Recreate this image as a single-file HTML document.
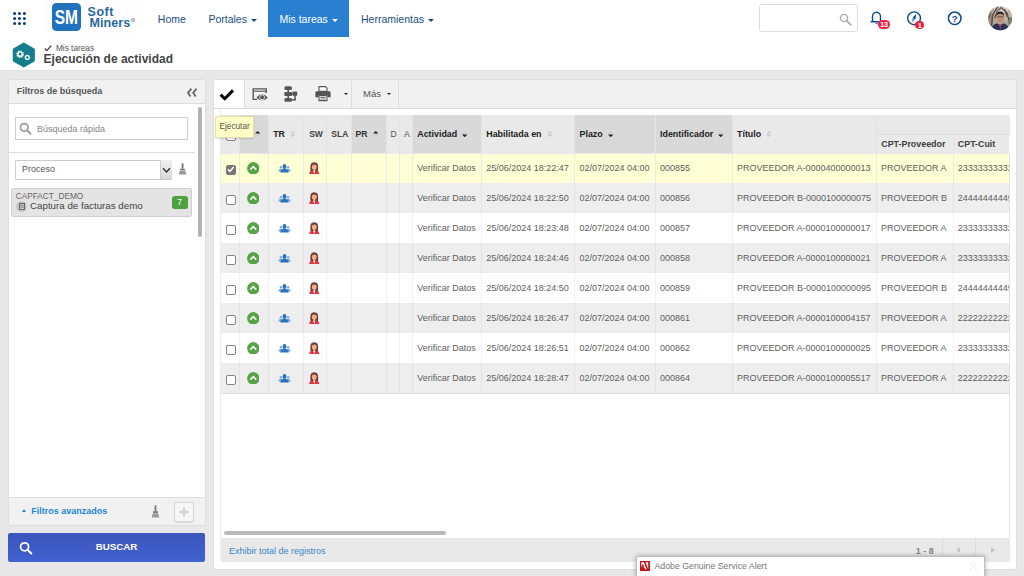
<!DOCTYPE html>
<html><head><meta charset="utf-8">
<style>
*{box-sizing:border-box;margin:0;padding:0}
html,body{width:1024px;height:576px;overflow:hidden;background:#e8e8e8;font-family:"Liberation Sans",sans-serif;color:#555}
.abs{position:absolute}
#top{position:absolute;left:0;top:0;width:1024px;height:71.2px;background:#fff;border-bottom:1px solid #e2e2e2}
.nav{position:absolute;top:0;height:37px;font-size:10.5px;color:#1c4e80;line-height:38.2px;white-space:nowrap}
.caret{display:inline-block;width:0;height:0;border-left:3px solid transparent;border-right:3px solid transparent;border-top:3px solid currentColor;vertical-align:middle;margin-left:4px}
#lp{position:absolute;left:8px;top:79.2px;width:197.5px;height:447px;background:#fff;border:1px solid #dedede;border-radius:3px;overflow:hidden}
#rp{position:absolute;left:213px;top:79.2px;width:804px;height:490.6px;background:#fff;border:1px solid #dedede;border-radius:3px}
#tb{position:absolute;left:0;top:0;right:0;height:28.6px;background:#f1f1f1;border-bottom:1px solid #d9d9d9;border-radius:3px 3px 0 0}
#grid{position:absolute;left:220px;top:115px;width:789.5px;height:447px;overflow:hidden;border-radius:2px}
#gi{position:absolute;left:1px;top:0;width:788.5px;height:447px}
.row{box-shadow:-1px 0 0 rgba(255,255,255,.5)}.row.e{box-shadow:-1px 0 0 rgba(238,238,238,.55)}.row.sel{box-shadow:-1px 0 0 rgba(255,255,213,.55)}
.hc{position:absolute;top:0;height:38.7px;background:#e9e9e9;border-right:1px solid #e4e4e4;font-size:8.9px;font-weight:bold;color:#222;line-height:38.6px;white-space:nowrap;overflow:hidden}
.hc.s{background:#d9d9d9}
.row{position:absolute;left:0;width:788.5px;height:30px;font-size:9px;color:#606060;line-height:30px}
.row.e{background:#eee}
.row.sel{background:linear-gradient(#e9e9e9 0,#e9e9e9 0.5px,#ffffd5 0.5px)}
.row.sel .c{border-right-color:rgba(215,215,235,.5)}
.c{position:absolute;top:0;height:30px;border-right:1px solid rgba(90,90,120,.075);white-space:nowrap;overflow:hidden;padding-left:4.5px}
.cb{position:absolute;left:4.75px;top:11.85px;width:9.75px;height:9.75px;border:1px solid #858585;border-radius:2px;background:#fff}
.cb.on{background:#767676;border-color:#767676}
</style></head><body>
<div id="top">
<!-- app grid icon -->
<svg class="abs" style="left:13px;top:11.5px" width="13" height="13" viewBox="0 0 13 13"><g fill="#0b3d7c">
<circle cx="1.6" cy="1.6" r="1.5"/><circle cx="6.5" cy="1.6" r="1.5"/><circle cx="11.4" cy="1.6" r="1.5"/>
<circle cx="1.6" cy="6.5" r="1.5"/><circle cx="6.5" cy="6.5" r="1.5"/><circle cx="11.4" cy="6.5" r="1.5"/>
<circle cx="1.6" cy="11.4" r="1.5"/><circle cx="6.5" cy="11.4" r="1.5"/><circle cx="11.4" cy="11.4" r="1.5"/></g></svg>
<!-- logo -->
<div class="abs" style="left:45px;top:0;width:97px;height:34px;background:#fdfdfe"></div>
<div class="abs" style="left:52.2px;top:2.9px;width:28.5px;height:27.9px;border-radius:4.5px;background:#1f72bb"></div>
<svg class="abs" style="left:52.2px;top:2.9px" width="28.5" height="27.9" viewBox="0 0 28.5 27.9"><text x="2.7" y="21.3" font-family="Liberation Sans" font-weight="bold" font-size="19.5" fill="#fff" textLength="23.2" lengthAdjust="spacingAndGlyphs">SM</text></svg>
<div class="abs" style="left:87.6px;top:5.7px;font-size:12.5px;line-height:13px;font-weight:bold;color:#2a6a9e;letter-spacing:0.5px">Soft</div>
<div class="abs" style="left:89.6px;top:17px;font-size:12.5px;line-height:13px;font-weight:bold;color:#2a6a9e;letter-spacing:0.05px">Miners</div>
<div class="abs" style="left:131px;top:17.7px;width:4.2px;height:4.2px;border-radius:2.1px;background:#8ea7ba"></div>
<div class="abs" style="left:132.1px;top:18.8px;width:2px;height:2px;border-radius:1px;background:#d5dee6"></div>
<!-- nav -->
<div class="nav" style="left:157.8px">Home</div>
<div class="nav" style="left:208.4px">Portales<span class="caret"></span></div>
<div class="nav" style="left:268px;width:81px;background:#2a80d0;color:#fff;padding-left:11.4px">Mis tareas<span class="caret"></span></div>
<div class="nav" style="left:361px">Herramientas<span class="caret"></span></div>
<!-- search -->
<div class="abs" style="left:758.5px;top:4.1px;width:99px;height:28.4px;border:1px solid #ddd;border-radius:3px;background:#fff"></div>
<svg class="abs" style="left:838.5px;top:12.5px" width="13" height="13" viewBox="0 0 13 13"><circle cx="5" cy="5" r="3.6" fill="none" stroke="#aaa" stroke-width="1.4"/><path d="M7.8 7.8 L11.8 11.8" stroke="#aaa" stroke-width="1.7" stroke-linecap="round"/></svg>
<!-- bell -->
<svg class="abs" style="left:869.5px;top:11px" width="14" height="15" viewBox="0 0 14 15"><path d="M2.5 10.6 L2.5 5.6 A4 4.4 0 0 1 10.5 5.6 L10.5 10.6 M1.1 10.7 L12 10.7" fill="none" stroke="#0c4a87" stroke-width="1.4" stroke-linecap="round"/><path d="M5.2 12.3 A1.5 1.5 0 0 0 8.0 12.3 Z" fill="#0c4a87"/></svg>
<div class="abs" style="left:878px;top:19.5px;width:12px;height:9.4px;border-radius:4.7px;background:#e9243f;color:#fff;font-size:7.3px;line-height:9.6px;letter-spacing:-0.3px;font-weight:bold;text-align:center">13</div>
<!-- compass -->
<svg class="abs" style="left:906.5px;top:11px" width="15" height="15" viewBox="0 0 15 15"><circle cx="7.1" cy="7.3" r="6.4" fill="#fff" stroke="#0c4a87" stroke-width="1.4"/><path d="M9.4 2.8 L5.4 6.9 L8.4 8.3 Z" fill="#0c4a87"/><path d="M5.2 11.6 L5.4 6.9 L8.4 8.3 Z" fill="#4f9be0"/></svg>
<div class="abs" style="left:915.4px;top:20.5px;width:8.8px;height:8.8px;border-radius:4.4px;background:#e9243f;color:#fff;font-size:7.3px;line-height:9px;font-weight:bold;text-align:center">1</div>
<!-- help -->
<svg class="abs" style="left:946.5px;top:11px" width="16" height="16" viewBox="0 0 16 16"><circle cx="7.7" cy="7.3" r="6.3" fill="#fff" stroke="#0c4a87" stroke-width="1.5"/><text x="7.7" y="10.6" font-family="Liberation Sans" font-size="9.5" font-weight="bold" fill="#0c4a87" text-anchor="middle">?</text></svg>
<!-- avatar -->
<svg class="abs" style="left:987.9px;top:6.3px" width="24.4" height="24.4" viewBox="0 0 24 24"><defs><clipPath id="av"><circle cx="12" cy="12" r="12"/></clipPath><filter id="avb"><feGaussianBlur stdDeviation="0.45"/></filter></defs><g clip-path="url(#av)"><g filter="url(#avb)"><rect x="-2" y="-2" width="28" height="28" fill="#b3a59b"/><rect x="6" y="-1" width="14" height="9" fill="#d6d1cd"/><rect x="16" y="6" width="9" height="9" fill="#c4b7a6"/><rect x="19.5" y="11" width="5" height="7" fill="#7b8466"/><rect x="-1" y="8" width="6" height="11" fill="#9d8f86"/><g stroke="#5e4a44" fill="none"><path d="M3.5 20 L4.5 9 L8 3 L10 1" stroke-width="1.4"/><path d="M6.5 12 L9 5 L13 1.5 L17 5.5 L19 11" stroke-width="1.2"/><path d="M20.5 14 L19 7 L16 3" stroke-width="1"/><path d="M1 12 L3 6" stroke-width="0.9"/></g><ellipse cx="12" cy="11.8" rx="3.5" ry="5" fill="#c09072"/><path d="M8.2 9.6 Q8 5.6 12 5.4 Q16 5.6 15.8 9.6 Q14 7.6 12 7.7 Q10 7.6 8.2 9.6 Z" fill="#2b2220"/><path d="M8.8 10.6 H15.2" stroke="#4a3a36" stroke-width="0.7"/><path d="M2.6 25 Q3 18.6 9.2 17 L12 19.5 L14.8 17 Q21 18.6 21.4 25 Z" fill="#2a3350"/><path d="M10.6 17.6 L12 22 L13.4 17.6 Z" fill="#c8426a"/><path d="M12 20 V25" stroke="#3c5cc0" stroke-width="0.7"/></g></g></svg>
<!-- title row -->
<svg class="abs" style="left:11.9px;top:41.7px" width="23.6" height="26" viewBox="0 0 23 26" preserveAspectRatio="none"><path d="M11.5 0.6 L21.4 6.3 Q22.3 6.8 22.3 7.8 L22.3 18.2 Q22.3 19.2 21.4 19.7 L11.5 25.4 L1.6 19.7 Q0.7 19.2 0.7 18.2 L0.7 7.8 Q0.7 6.8 1.6 6.3 Z" fill="#137f8c"/><circle cx="7.9" cy="12.2" r="2.2" fill="none" stroke="#fff" stroke-width="1.6"/><circle cx="7.9" cy="12.2" r="3.3" fill="none" stroke="#fff" stroke-width="1" stroke-dasharray="1.2 1.4"/><circle cx="14.9" cy="15.4" r="1.9" fill="none" stroke="#fff" stroke-width="1.3"/></svg>
<svg class="abs" style="left:43.5px;top:45.3px" width="8" height="7" viewBox="0 0 8 7"><path d="M0.8 3.6 L2.8 5.6 L7.2 0.8" fill="none" stroke="#444" stroke-width="1.35"/></svg>
<div class="abs" style="left:56px;top:44.2px;font-size:8.25px;line-height:10px;color:#555;white-space:nowrap">Mis tareas</div>
<div class="abs" style="left:43.6px;top:51.5px;font-size:12px;line-height:14px;font-weight:bold;color:#444;white-space:nowrap">Ejecución de actividad</div>
</div>
<div id="lp"><div class="abs" style="left:-9px;top:-80.2px;width:220px;height:576px">
<div class="abs" style="left:8px;top:80px;width:198px;height:24.2px;background:#f1f1f1;border-bottom:1px solid #dcdcdc"></div>
<div class="abs" style="left:16.7px;top:85.5px;font-size:9px;line-height:11px;font-weight:bold;color:#555;white-space:nowrap">Filtros de búsqueda</div>
<svg class="abs" style="left:186px;top:87.5px" width="12" height="9" viewBox="0 0 12 9"><path d="M5.4 0.6 L2 4.6 L4.4 8.4 M10.6 0.6 L7.2 4.6 L9.6 8.4" fill="none" stroke="#666" stroke-width="1.8"/></svg>
<!-- scrollbar -->
<div class="abs" style="left:198.4px;top:106.6px;width:3.6px;height:130.6px;border-radius:2px;background:#b3b3b3"></div>
<!-- quick search -->
<div class="abs" style="left:15.3px;top:117px;width:172.7px;height:22.8px;border:1px solid #ccc;background:#fff"></div>
<svg class="abs" style="left:19px;top:121.7px" width="13" height="13" viewBox="0 0 13 13"><circle cx="5.2" cy="5.4" r="3.8" fill="none" stroke="#9a9a9a" stroke-width="1.7"/><path d="M8.2 8.4 L11.6 11.8" stroke="#9a9a9a" stroke-width="1.9" stroke-linecap="round"/></svg>
<div class="abs" style="left:37px;top:123.8px;font-size:9px;line-height:11px;color:#858585;white-space:nowrap">Búsqueda rápida</div>
<div class="abs" style="left:9px;top:151.7px;width:185.7px;height:1px;background:#dcdcdc"></div>
<!-- select -->
<div class="abs" style="left:15.3px;top:159.5px;width:157px;height:20.2px;border:1px solid #ccc;background:#fff;border-radius:1px"></div>
<div class="abs" style="left:159.7px;top:160.3px;width:12px;height:18.6px;background:linear-gradient(#f0f0f0,#d8d8d8);border-left:1px solid #ccc"></div>
<svg class="abs" style="left:161.5px;top:166.5px" width="9" height="7" viewBox="0 0 9 7"><path d="M1 1.3 L4.5 5 L8 1.3" fill="none" stroke="#333" stroke-width="1.5"/></svg>
<div class="abs" style="left:22px;top:164.1px;font-size:9px;line-height:11px;color:#555;white-space:nowrap">Proceso</div>
<!-- broom -->
<svg class="abs" style="left:177.9px;top:162.7px" width="9.2" height="12" viewBox="0 0 8 12" preserveAspectRatio="none"><rect x="3.2" y="0.3" width="1.6" height="5.5" fill="#777"/><rect x="1.8" y="5.8" width="4.4" height="1.6" fill="#777"/><path d="M1.6 7.8 L6.4 7.8 L7.4 11.4 L0.6 11.4 Z" fill="#999"/></svg>
<!-- item -->
<div class="abs" style="left:11.3px;top:187.8px;width:180.3px;height:29px;background:#e4e4e4;border:1px solid #d0d0d0;border-radius:2px"></div>
<div class="abs" style="left:15.8px;top:191.8px;font-size:8.25px;line-height:10px;color:#666;white-space:nowrap">CAPFACT_DEMO</div>
<div class="abs" style="left:16.2px;top:201.4px;width:10.5px;height:10.5px;border-radius:6px;background:#c8c8c8"></div>
<svg class="abs" style="left:18.7px;top:203.4px" width="6" height="7" viewBox="0 0 6 7"><rect x="0.5" y="0.5" width="5" height="6" fill="none" stroke="#666" stroke-width="1"/><path d="M1.5 2.5 H4.5 M1.5 4.3 H4.5" stroke="#666" stroke-width="0.7"/></svg>
<div class="abs" style="left:30px;top:200.3px;font-size:9.75px;line-height:12px;color:#444;white-space:nowrap">Captura de facturas demo</div>
<div class="abs" style="left:171.5px;top:196px;width:16.1px;height:12.9px;background:#4fa13f;border-radius:2.5px;color:#fff;font-size:9px;line-height:12.5px;text-align:center">7</div>
<!-- footer -->
<div class="abs" style="left:8px;top:497px;width:198px;height:30px;background:#f1f1f1;border-top:1px solid #dcdcdc"></div>
<div class="abs" style="left:21.8px;top:509.3px;width:0;height:0;border-left:2.8px solid transparent;border-right:2.8px solid transparent;border-bottom:3.4px solid #1b87d4"></div>
<div class="abs" style="left:31.2px;top:506px;font-size:9px;line-height:11px;font-weight:bold;color:#1b87d4;white-space:nowrap">Filtros avanzados</div>
<svg class="abs" style="left:151px;top:504.5px" width="9" height="13" viewBox="0 0 9 13"><rect x="3.6" y="0.3" width="1.8" height="6" fill="#777"/><rect x="2" y="6.2" width="5" height="1.7" fill="#777"/><path d="M1.8 8.3 L7.2 8.3 L8.4 12.6 L0.6 12.6 Z" fill="#9a9a9a"/></svg>
<div class="abs" style="left:173.5px;top:501.5px;width:20.5px;height:20px;border:1px solid #d6d6d6;border-radius:2px;background:#f5f5f5;box-shadow:0 0.5px 1px rgba(0,0,0,.08)"></div>
<svg class="abs" style="left:178.5px;top:506.5px" width="10" height="10" viewBox="0 0 10 10"><path d="M5 0.5 V9.5 M0.5 5 H9.5" stroke="#d2d2d2" stroke-width="2.5"/></svg>
</div></div>
<!-- buscar -->
<div class="abs" style="left:8.2px;top:533.2px;width:196.8px;height:28.5px;border-radius:2px;background:linear-gradient(#3c55ba,#4162d2)"></div>
<svg class="abs" style="left:18.9px;top:540.7px" width="14" height="14" viewBox="0 0 14 14"><circle cx="5.6" cy="5.8" r="4" fill="none" stroke="#fff" stroke-width="1.7"/><path d="M8.7 8.9 L12.3 12.5" stroke="#fff" stroke-width="2" stroke-linecap="round"/></svg>
<div class="abs" style="left:95.7px;top:541px;font-size:9.75px;line-height:12px;font-weight:bold;color:#fff;white-space:nowrap">BUSCAR</div>
<div id="rp"><div id="tb"><div class="abs" style="left:-214px;top:-80.2px;width:1024px;height:120px">
<div class="abs" style="left:214px;top:80.2px;width:30.2px;height:27.6px;background:#fff;border-radius:3px 0 0 0"></div>
<div class="abs" style="left:244.2px;top:80.5px;width:1px;height:28px;background:#dcdcdc"></div>
<div class="abs" style="left:351.2px;top:80.5px;width:1px;height:28px;background:#dcdcdc"></div>
<div class="abs" style="left:398.4px;top:80.5px;width:1px;height:28px;background:#dcdcdc"></div>
<svg class="abs" style="left:218.7px;top:88px" width="16" height="13" viewBox="0 0 16 13"><path d="M1.6 6.6 L5.8 10.8 L14 2.4" fill="none" stroke="#000" stroke-width="3" stroke-linejoin="round"/></svg>
<!-- window eye -->
<svg class="abs" style="left:252.4px;top:87.9px" width="16" height="14" viewBox="0 0 16 14"><path d="M5.2 11.4 H1.2 V0.9 H14.2 V5" fill="none" stroke="#555" stroke-width="1.4"/><path d="M1.2 3.2 H14.2" stroke="#555" stroke-width="1.1"/><path d="M4.4 9.4 Q10 3.2 15.8 9.4 Q10 15.2 4.4 9.4 Z" fill="#555"/><circle cx="10.1" cy="9.3" r="2.5" fill="none" stroke="#f1f1f1" stroke-width="0.9"/></svg>
<!-- flow -->
<svg class="abs" style="left:283.8px;top:86.2px" width="14" height="16" viewBox="0 0 14 16"><g fill="#555"><rect x="0.4" y="0.2" width="7.6" height="3.8" rx="1.5"/><rect x="0.4" y="6" width="7.6" height="4" rx="0.5"/><rect x="0.4" y="11.9" width="7.6" height="3.8" rx="1.5"/><rect x="8.6" y="5.6" width="4.6" height="4.2" rx="0.5"/><rect x="3.4" y="3" width="1.6" height="10"/><rect x="7" y="7.2" width="3" height="1.5"/><rect x="10.3" y="9" width="1.5" height="5.2"/><rect x="7.4" y="13" width="4.4" height="1.5"/></g></svg>
<!-- printer -->
<svg class="abs" style="left:315.1px;top:86.1px" width="16" height="16" viewBox="0 0 16 16"><g fill="#555"><path d="M4 0.6 H10.4 L12 2.2 V5.4 H4 Z" fill="#fff" stroke="#555" stroke-width="1.1"/><path d="M1.6 5.2 H14.4 Q15.6 5.2 15.6 6.4 V11.2 H12.6 V9 H3.4 V11.2 H0.4 V6.4 Q0.4 5.2 1.6 5.2 Z"/><path d="M4 9.6 H12 V14.6 H4 Z" fill="#fff" stroke="#555" stroke-width="1.1"/><rect x="5.4" y="11" width="5.2" height="0.8"/><rect x="5.4" y="12.6" width="5.2" height="0.8"/></g></svg>
<div class="abs" style="left:343.9px;top:92.9px;width:0;height:0;border-left:2px solid transparent;border-right:2px solid transparent;border-top:2.6px solid #222"></div>
<div class="abs" style="left:363px;top:87.8px;font-size:9.5px;line-height:11px;color:#555;white-space:nowrap">Más</div>
<div class="abs" style="left:387.3px;top:93px;width:0;height:0;border-left:2.1px solid transparent;border-right:2.1px solid transparent;border-top:2.6px solid #222"></div>
</div></div></div>
<div id="grid"><div id="gi">
<div class="hc " style="left:0px;width:19.25px;box-shadow:-1px 0 0 rgba(233,233,233,.6)"></div>
<div class="hc s" style="left:19.25px;width:28.25px;padding-left:10px"><svg style="display:inline-block;vertical-align:middle;margin-left:5.2px;margin-top:-0.6px" width="5.4" height="6.2" viewBox="0 0 5.4 6.2"><path d="M0 2.4 L2.7 0 L5.4 2.4 Z" fill="#222"/><path d="M0 3.6 L2.7 6.2 L5.4 3.6 Z" fill="#cdcdcd"/></svg></div>
<div class="hc " style="left:47.5px;width:35.5px;padding-left:4.7px;font-size:8.7px;word-spacing:-1.5px">TR<svg style="display:inline-block;vertical-align:middle;margin-left:5.2px;margin-top:-0.6px" width="5.4" height="6.2" viewBox="0 0 5.4 6.2"><path d="M0 2.4 L2.7 0 L5.4 2.4 Z" fill="#cdcdcd"/><path d="M0 3.6 L2.7 6.2 L5.4 3.6 Z" fill="#cdcdcd"/></svg></div>
<div class="hc " style="left:83px;width:22.5px;padding-left:5.2px;color:#444;font-size:8.5px">SW</div>
<div class="hc " style="left:105.5px;width:25.0px;padding-left:4.8px;color:#444;font-size:8.5px">SLA</div>
<div class="hc s" style="left:130.5px;width:35.25px;padding-left:4px;color:#333;font-size:8.7px">PR<svg style="display:inline-block;vertical-align:middle;margin-left:5.2px;margin-top:-0.6px" width="5.4" height="6.2" viewBox="0 0 5.4 6.2"><path d="M0 2.4 L2.7 0 L5.4 2.4 Z" fill="#222"/><path d="M0 3.6 L2.7 6.2 L5.4 3.6 Z" fill="#cdcdcd"/></svg></div>
<div class="hc " style="left:165.75px;width:13.5px;padding-left:3.75px;font-weight:normal;color:#555;font-size:8.7px">D</div>
<div class="hc " style="left:179.25px;width:12.5px;padding-left:3.75px;font-weight:normal;color:#555;font-size:8.7px">A</div>
<div class="hc s" style="left:191.75px;width:69.0px;padding-left:4.5px">Actividad<svg style="display:inline-block;vertical-align:middle;margin-left:5.2px;margin-top:-0.6px" width="5.4" height="6.2" viewBox="0 0 5.4 6.2"><path d="M0 2.4 L2.7 0 L5.4 2.4 Z" fill="#cdcdcd"/><path d="M0 3.6 L2.7 6.2 L5.4 3.6 Z" fill="#222"/></svg></div>
<div class="hc " style="left:260.75px;width:93.25px;padding-left:4.5px">Habilitada en<svg style="display:inline-block;vertical-align:middle;margin-left:5.2px;margin-top:-0.6px" width="5.4" height="6.2" viewBox="0 0 5.4 6.2"><path d="M0 2.4 L2.7 0 L5.4 2.4 Z" fill="#cdcdcd"/><path d="M0 3.6 L2.7 6.2 L5.4 3.6 Z" fill="#cdcdcd"/></svg></div>
<div class="hc s" style="left:354px;width:80.5px;padding-left:4.5px">Plazo<svg style="display:inline-block;vertical-align:middle;margin-left:5.2px;margin-top:-0.6px" width="5.4" height="6.2" viewBox="0 0 5.4 6.2"><path d="M0 2.4 L2.7 0 L5.4 2.4 Z" fill="#cdcdcd"/><path d="M0 3.6 L2.7 6.2 L5.4 3.6 Z" fill="#222"/></svg></div>
<div class="hc s" style="left:434.5px;width:77.0px;padding-left:4.5px">Identificador<svg style="display:inline-block;vertical-align:middle;margin-left:5.2px;margin-top:-0.6px" width="5.4" height="6.2" viewBox="0 0 5.4 6.2"><path d="M0 2.4 L2.7 0 L5.4 2.4 Z" fill="#cdcdcd"/><path d="M0 3.6 L2.7 6.2 L5.4 3.6 Z" fill="#222"/></svg></div>
<div class="hc " style="left:511.5px;width:144.0px;padding-left:4.5px">Título<svg style="display:inline-block;vertical-align:middle;margin-left:5.2px;margin-top:-0.6px" width="5.4" height="6.2" viewBox="0 0 5.4 6.2"><path d="M0 2.4 L2.7 0 L5.4 2.4 Z" fill="#cdcdcd"/><path d="M0 3.6 L2.7 6.2 L5.4 3.6 Z" fill="#cdcdcd"/></svg></div>
<div class="hc" style="left:655.5px;width:133.0px;height:19.5px;border-bottom:1px solid #dedede;border-right:none"></div>
<div class="hc" style="left:655.5px;width:77.45px;top:19.5px;height:19.2px;line-height:19px;padding-left:4.75px;color:#404040">CPT-Proveedor</div>
<div class="hc" style="left:732.95px;width:55.55px;top:19.5px;height:19.2px;line-height:19px;padding-left:3.9px;color:#404040;border-right:none">CPT-Cuit</div>
<div class="cb" style="top:16px"></div>
<div class="row sel" style="top:38.15px;z-index:0"><div class="c" style="left:0px;width:19.25px;padding-left:0;"><div class="cb on"><svg class="abs" style="left:0.2px;top:0.5px" width="7.5" height="6.5" viewBox="0 0 7.5 6.5"><path d="M0.8 3.3 L2.9 5.3 L6.8 0.9" fill="none" stroke="#fff" stroke-width="1.5"/></svg></div></div><div class="c" style="left:19.25px;width:28.25px;padding-left:0;"><svg class="abs" style="left:6.6px;top:8.7px" width="12.6" height="12.6" viewBox="0 0 12.6 12.6"><circle cx="6.3" cy="6.3" r="6.2" fill="#55a344"/><path d="M3.3 7.6 L6.3 4.6 L9.3 7.6" fill="none" stroke="#fff" stroke-width="1.5"/></svg></div><div class="c" style="left:47.5px;width:35.5px;padding-left:0;"><svg class="abs" style="left:9.4px;top:11px" width="13" height="9" viewBox="0 0 13 9"><g fill="#7aaede"><circle cx="2.9" cy="3.2" r="1.25"/><path d="M0.2 7.4 Q0.4 4.9 2.6 4.8 L4.4 4.8 L4.4 7.4 Z"/><circle cx="10.1" cy="3.2" r="1.25"/><path d="M12.8 7.4 Q12.6 4.9 10.4 4.8 L8.6 4.8 L8.6 7.4 Z"/></g><g fill="#2a72b9"><ellipse cx="6.5" cy="2.4" rx="1.9" ry="2.3"/><path d="M2.3 8.5 Q2.3 5.6 5.2 5 L5.6 4.2 L7.4 4.2 L7.8 5 Q10.7 5.6 10.7 8.5 Z"/></g></svg></div><div class="c" style="left:83px;width:22.5px;padding-left:0;"><svg class="abs" style="left:5px;top:8.7px" width="10.5" height="12.5" viewBox="0 0 10.5 12.5"><path d="M1.6 9.4 Q0.6 1.8 3.2 0.7 Q5.25 -0.3 7.3 0.7 Q9.9 1.8 8.9 9.4 Z" fill="#6e3b3f"/><ellipse cx="5.25" cy="4.8" rx="2.45" ry="2.9" fill="#f3ad80"/><path d="M3 3.6 Q5.2 1.2 7.6 3.6 Q7 1.2 5.25 1.2 Q3.4 1.2 3 3.6Z" fill="#6e3b3f"/><rect x="4.3" y="6.8" width="1.9" height="2.2" fill="#f4b590"/><path d="M0.2 12.4 Q0.3 9 3.4 8.6 L5.25 10.3 L7.1 8.6 Q10.2 9 10.3 12.4 Z" fill="#e2343f"/><path d="M4.3 9 L5.25 12 L6.2 9 Z" fill="#f3f3f3"/></svg></div><div class="c" style="left:105.5px;width:25.0px;padding-left:0;"></div><div class="c" style="left:130.5px;width:35.25px;padding-left:0;"></div><div class="c" style="left:165.75px;width:13.5px;padding-left:0;"></div><div class="c" style="left:179.25px;width:12.5px;padding-left:0;"></div><div class="c" style="left:191.75px;width:69.0px;">Verificar Datos</div><div class="c" style="left:260.75px;width:93.25px;">25/06/2024 18:22:47</div><div class="c" style="left:354px;width:80.5px;">02/07/2024 04:00</div><div class="c" style="left:434.5px;width:77.0px;">000855</div><div class="c" style="left:511.5px;width:144.0px;">PROVEEDOR A-0000400000013</div><div class="c" style="left:655.5px;width:77.45px;">PROVEEDOR A</div><div class="c" style="left:732.95px;width:55.55px;border-right:none;padding-left:3.7px">23333333332</div></div>
<div class="row e" style="top:68.15px"><div class="c" style="left:0px;width:19.25px;padding-left:0;"><div class="cb "></div></div><div class="c" style="left:19.25px;width:28.25px;padding-left:0;"><svg class="abs" style="left:6.6px;top:8.7px" width="12.6" height="12.6" viewBox="0 0 12.6 12.6"><circle cx="6.3" cy="6.3" r="6.2" fill="#55a344"/><path d="M3.3 7.6 L6.3 4.6 L9.3 7.6" fill="none" stroke="#fff" stroke-width="1.5"/></svg></div><div class="c" style="left:47.5px;width:35.5px;padding-left:0;"><svg class="abs" style="left:9.4px;top:11px" width="13" height="9" viewBox="0 0 13 9"><g fill="#7aaede"><circle cx="2.9" cy="3.2" r="1.25"/><path d="M0.2 7.4 Q0.4 4.9 2.6 4.8 L4.4 4.8 L4.4 7.4 Z"/><circle cx="10.1" cy="3.2" r="1.25"/><path d="M12.8 7.4 Q12.6 4.9 10.4 4.8 L8.6 4.8 L8.6 7.4 Z"/></g><g fill="#2a72b9"><ellipse cx="6.5" cy="2.4" rx="1.9" ry="2.3"/><path d="M2.3 8.5 Q2.3 5.6 5.2 5 L5.6 4.2 L7.4 4.2 L7.8 5 Q10.7 5.6 10.7 8.5 Z"/></g></svg></div><div class="c" style="left:83px;width:22.5px;padding-left:0;"><svg class="abs" style="left:5px;top:8.7px" width="10.5" height="12.5" viewBox="0 0 10.5 12.5"><path d="M1.6 9.4 Q0.6 1.8 3.2 0.7 Q5.25 -0.3 7.3 0.7 Q9.9 1.8 8.9 9.4 Z" fill="#6e3b3f"/><ellipse cx="5.25" cy="4.8" rx="2.45" ry="2.9" fill="#f3ad80"/><path d="M3 3.6 Q5.2 1.2 7.6 3.6 Q7 1.2 5.25 1.2 Q3.4 1.2 3 3.6Z" fill="#6e3b3f"/><rect x="4.3" y="6.8" width="1.9" height="2.2" fill="#f4b590"/><path d="M0.2 12.4 Q0.3 9 3.4 8.6 L5.25 10.3 L7.1 8.6 Q10.2 9 10.3 12.4 Z" fill="#e2343f"/><path d="M4.3 9 L5.25 12 L6.2 9 Z" fill="#f3f3f3"/></svg></div><div class="c" style="left:105.5px;width:25.0px;padding-left:0;"></div><div class="c" style="left:130.5px;width:35.25px;padding-left:0;"></div><div class="c" style="left:165.75px;width:13.5px;padding-left:0;"></div><div class="c" style="left:179.25px;width:12.5px;padding-left:0;"></div><div class="c" style="left:191.75px;width:69.0px;">Verificar Datos</div><div class="c" style="left:260.75px;width:93.25px;">25/06/2024 18:22:50</div><div class="c" style="left:354px;width:80.5px;">02/07/2024 04:00</div><div class="c" style="left:434.5px;width:77.0px;">000856</div><div class="c" style="left:511.5px;width:144.0px;">PROVEEDOR B-0000100000075</div><div class="c" style="left:655.5px;width:77.45px;">PROVEEDOR B</div><div class="c" style="left:732.95px;width:55.55px;border-right:none;padding-left:3.7px">24444444449</div></div>
<div class="row " style="top:98.15px"><div class="c" style="left:0px;width:19.25px;padding-left:0;"><div class="cb "></div></div><div class="c" style="left:19.25px;width:28.25px;padding-left:0;"><svg class="abs" style="left:6.6px;top:8.7px" width="12.6" height="12.6" viewBox="0 0 12.6 12.6"><circle cx="6.3" cy="6.3" r="6.2" fill="#55a344"/><path d="M3.3 7.6 L6.3 4.6 L9.3 7.6" fill="none" stroke="#fff" stroke-width="1.5"/></svg></div><div class="c" style="left:47.5px;width:35.5px;padding-left:0;"><svg class="abs" style="left:9.4px;top:11px" width="13" height="9" viewBox="0 0 13 9"><g fill="#7aaede"><circle cx="2.9" cy="3.2" r="1.25"/><path d="M0.2 7.4 Q0.4 4.9 2.6 4.8 L4.4 4.8 L4.4 7.4 Z"/><circle cx="10.1" cy="3.2" r="1.25"/><path d="M12.8 7.4 Q12.6 4.9 10.4 4.8 L8.6 4.8 L8.6 7.4 Z"/></g><g fill="#2a72b9"><ellipse cx="6.5" cy="2.4" rx="1.9" ry="2.3"/><path d="M2.3 8.5 Q2.3 5.6 5.2 5 L5.6 4.2 L7.4 4.2 L7.8 5 Q10.7 5.6 10.7 8.5 Z"/></g></svg></div><div class="c" style="left:83px;width:22.5px;padding-left:0;"><svg class="abs" style="left:5px;top:8.7px" width="10.5" height="12.5" viewBox="0 0 10.5 12.5"><path d="M1.6 9.4 Q0.6 1.8 3.2 0.7 Q5.25 -0.3 7.3 0.7 Q9.9 1.8 8.9 9.4 Z" fill="#6e3b3f"/><ellipse cx="5.25" cy="4.8" rx="2.45" ry="2.9" fill="#f3ad80"/><path d="M3 3.6 Q5.2 1.2 7.6 3.6 Q7 1.2 5.25 1.2 Q3.4 1.2 3 3.6Z" fill="#6e3b3f"/><rect x="4.3" y="6.8" width="1.9" height="2.2" fill="#f4b590"/><path d="M0.2 12.4 Q0.3 9 3.4 8.6 L5.25 10.3 L7.1 8.6 Q10.2 9 10.3 12.4 Z" fill="#e2343f"/><path d="M4.3 9 L5.25 12 L6.2 9 Z" fill="#f3f3f3"/></svg></div><div class="c" style="left:105.5px;width:25.0px;padding-left:0;"></div><div class="c" style="left:130.5px;width:35.25px;padding-left:0;"></div><div class="c" style="left:165.75px;width:13.5px;padding-left:0;"></div><div class="c" style="left:179.25px;width:12.5px;padding-left:0;"></div><div class="c" style="left:191.75px;width:69.0px;">Verificar Datos</div><div class="c" style="left:260.75px;width:93.25px;">25/06/2024 18:23:48</div><div class="c" style="left:354px;width:80.5px;">02/07/2024 04:00</div><div class="c" style="left:434.5px;width:77.0px;">000857</div><div class="c" style="left:511.5px;width:144.0px;">PROVEEDOR A-0000100000017</div><div class="c" style="left:655.5px;width:77.45px;">PROVEEDOR A</div><div class="c" style="left:732.95px;width:55.55px;border-right:none;padding-left:3.7px">23333333332</div></div>
<div class="row e" style="top:128.15px"><div class="c" style="left:0px;width:19.25px;padding-left:0;"><div class="cb "></div></div><div class="c" style="left:19.25px;width:28.25px;padding-left:0;"><svg class="abs" style="left:6.6px;top:8.7px" width="12.6" height="12.6" viewBox="0 0 12.6 12.6"><circle cx="6.3" cy="6.3" r="6.2" fill="#55a344"/><path d="M3.3 7.6 L6.3 4.6 L9.3 7.6" fill="none" stroke="#fff" stroke-width="1.5"/></svg></div><div class="c" style="left:47.5px;width:35.5px;padding-left:0;"><svg class="abs" style="left:9.4px;top:11px" width="13" height="9" viewBox="0 0 13 9"><g fill="#7aaede"><circle cx="2.9" cy="3.2" r="1.25"/><path d="M0.2 7.4 Q0.4 4.9 2.6 4.8 L4.4 4.8 L4.4 7.4 Z"/><circle cx="10.1" cy="3.2" r="1.25"/><path d="M12.8 7.4 Q12.6 4.9 10.4 4.8 L8.6 4.8 L8.6 7.4 Z"/></g><g fill="#2a72b9"><ellipse cx="6.5" cy="2.4" rx="1.9" ry="2.3"/><path d="M2.3 8.5 Q2.3 5.6 5.2 5 L5.6 4.2 L7.4 4.2 L7.8 5 Q10.7 5.6 10.7 8.5 Z"/></g></svg></div><div class="c" style="left:83px;width:22.5px;padding-left:0;"><svg class="abs" style="left:5px;top:8.7px" width="10.5" height="12.5" viewBox="0 0 10.5 12.5"><path d="M1.6 9.4 Q0.6 1.8 3.2 0.7 Q5.25 -0.3 7.3 0.7 Q9.9 1.8 8.9 9.4 Z" fill="#6e3b3f"/><ellipse cx="5.25" cy="4.8" rx="2.45" ry="2.9" fill="#f3ad80"/><path d="M3 3.6 Q5.2 1.2 7.6 3.6 Q7 1.2 5.25 1.2 Q3.4 1.2 3 3.6Z" fill="#6e3b3f"/><rect x="4.3" y="6.8" width="1.9" height="2.2" fill="#f4b590"/><path d="M0.2 12.4 Q0.3 9 3.4 8.6 L5.25 10.3 L7.1 8.6 Q10.2 9 10.3 12.4 Z" fill="#e2343f"/><path d="M4.3 9 L5.25 12 L6.2 9 Z" fill="#f3f3f3"/></svg></div><div class="c" style="left:105.5px;width:25.0px;padding-left:0;"></div><div class="c" style="left:130.5px;width:35.25px;padding-left:0;"></div><div class="c" style="left:165.75px;width:13.5px;padding-left:0;"></div><div class="c" style="left:179.25px;width:12.5px;padding-left:0;"></div><div class="c" style="left:191.75px;width:69.0px;">Verificar Datos</div><div class="c" style="left:260.75px;width:93.25px;">25/06/2024 18:24:46</div><div class="c" style="left:354px;width:80.5px;">02/07/2024 04:00</div><div class="c" style="left:434.5px;width:77.0px;">000858</div><div class="c" style="left:511.5px;width:144.0px;">PROVEEDOR A-0000100000021</div><div class="c" style="left:655.5px;width:77.45px;">PROVEEDOR A</div><div class="c" style="left:732.95px;width:55.55px;border-right:none;padding-left:3.7px">23333333332</div></div>
<div class="row " style="top:158.15px"><div class="c" style="left:0px;width:19.25px;padding-left:0;"><div class="cb "></div></div><div class="c" style="left:19.25px;width:28.25px;padding-left:0;"><svg class="abs" style="left:6.6px;top:8.7px" width="12.6" height="12.6" viewBox="0 0 12.6 12.6"><circle cx="6.3" cy="6.3" r="6.2" fill="#55a344"/><path d="M3.3 7.6 L6.3 4.6 L9.3 7.6" fill="none" stroke="#fff" stroke-width="1.5"/></svg></div><div class="c" style="left:47.5px;width:35.5px;padding-left:0;"><svg class="abs" style="left:9.4px;top:11px" width="13" height="9" viewBox="0 0 13 9"><g fill="#7aaede"><circle cx="2.9" cy="3.2" r="1.25"/><path d="M0.2 7.4 Q0.4 4.9 2.6 4.8 L4.4 4.8 L4.4 7.4 Z"/><circle cx="10.1" cy="3.2" r="1.25"/><path d="M12.8 7.4 Q12.6 4.9 10.4 4.8 L8.6 4.8 L8.6 7.4 Z"/></g><g fill="#2a72b9"><ellipse cx="6.5" cy="2.4" rx="1.9" ry="2.3"/><path d="M2.3 8.5 Q2.3 5.6 5.2 5 L5.6 4.2 L7.4 4.2 L7.8 5 Q10.7 5.6 10.7 8.5 Z"/></g></svg></div><div class="c" style="left:83px;width:22.5px;padding-left:0;"><svg class="abs" style="left:5px;top:8.7px" width="10.5" height="12.5" viewBox="0 0 10.5 12.5"><path d="M1.6 9.4 Q0.6 1.8 3.2 0.7 Q5.25 -0.3 7.3 0.7 Q9.9 1.8 8.9 9.4 Z" fill="#6e3b3f"/><ellipse cx="5.25" cy="4.8" rx="2.45" ry="2.9" fill="#f3ad80"/><path d="M3 3.6 Q5.2 1.2 7.6 3.6 Q7 1.2 5.25 1.2 Q3.4 1.2 3 3.6Z" fill="#6e3b3f"/><rect x="4.3" y="6.8" width="1.9" height="2.2" fill="#f4b590"/><path d="M0.2 12.4 Q0.3 9 3.4 8.6 L5.25 10.3 L7.1 8.6 Q10.2 9 10.3 12.4 Z" fill="#e2343f"/><path d="M4.3 9 L5.25 12 L6.2 9 Z" fill="#f3f3f3"/></svg></div><div class="c" style="left:105.5px;width:25.0px;padding-left:0;"></div><div class="c" style="left:130.5px;width:35.25px;padding-left:0;"></div><div class="c" style="left:165.75px;width:13.5px;padding-left:0;"></div><div class="c" style="left:179.25px;width:12.5px;padding-left:0;"></div><div class="c" style="left:191.75px;width:69.0px;">Verificar Datos</div><div class="c" style="left:260.75px;width:93.25px;">25/06/2024 18:24:50</div><div class="c" style="left:354px;width:80.5px;">02/07/2024 04:00</div><div class="c" style="left:434.5px;width:77.0px;">000859</div><div class="c" style="left:511.5px;width:144.0px;">PROVEEDOR B-0000100000095</div><div class="c" style="left:655.5px;width:77.45px;">PROVEEDOR B</div><div class="c" style="left:732.95px;width:55.55px;border-right:none;padding-left:3.7px">24444444449</div></div>
<div class="row e" style="top:188.15px"><div class="c" style="left:0px;width:19.25px;padding-left:0;"><div class="cb "></div></div><div class="c" style="left:19.25px;width:28.25px;padding-left:0;"><svg class="abs" style="left:6.6px;top:8.7px" width="12.6" height="12.6" viewBox="0 0 12.6 12.6"><circle cx="6.3" cy="6.3" r="6.2" fill="#55a344"/><path d="M3.3 7.6 L6.3 4.6 L9.3 7.6" fill="none" stroke="#fff" stroke-width="1.5"/></svg></div><div class="c" style="left:47.5px;width:35.5px;padding-left:0;"><svg class="abs" style="left:9.4px;top:11px" width="13" height="9" viewBox="0 0 13 9"><g fill="#7aaede"><circle cx="2.9" cy="3.2" r="1.25"/><path d="M0.2 7.4 Q0.4 4.9 2.6 4.8 L4.4 4.8 L4.4 7.4 Z"/><circle cx="10.1" cy="3.2" r="1.25"/><path d="M12.8 7.4 Q12.6 4.9 10.4 4.8 L8.6 4.8 L8.6 7.4 Z"/></g><g fill="#2a72b9"><ellipse cx="6.5" cy="2.4" rx="1.9" ry="2.3"/><path d="M2.3 8.5 Q2.3 5.6 5.2 5 L5.6 4.2 L7.4 4.2 L7.8 5 Q10.7 5.6 10.7 8.5 Z"/></g></svg></div><div class="c" style="left:83px;width:22.5px;padding-left:0;"><svg class="abs" style="left:5px;top:8.7px" width="10.5" height="12.5" viewBox="0 0 10.5 12.5"><path d="M1.6 9.4 Q0.6 1.8 3.2 0.7 Q5.25 -0.3 7.3 0.7 Q9.9 1.8 8.9 9.4 Z" fill="#6e3b3f"/><ellipse cx="5.25" cy="4.8" rx="2.45" ry="2.9" fill="#f3ad80"/><path d="M3 3.6 Q5.2 1.2 7.6 3.6 Q7 1.2 5.25 1.2 Q3.4 1.2 3 3.6Z" fill="#6e3b3f"/><rect x="4.3" y="6.8" width="1.9" height="2.2" fill="#f4b590"/><path d="M0.2 12.4 Q0.3 9 3.4 8.6 L5.25 10.3 L7.1 8.6 Q10.2 9 10.3 12.4 Z" fill="#e2343f"/><path d="M4.3 9 L5.25 12 L6.2 9 Z" fill="#f3f3f3"/></svg></div><div class="c" style="left:105.5px;width:25.0px;padding-left:0;"></div><div class="c" style="left:130.5px;width:35.25px;padding-left:0;"></div><div class="c" style="left:165.75px;width:13.5px;padding-left:0;"></div><div class="c" style="left:179.25px;width:12.5px;padding-left:0;"></div><div class="c" style="left:191.75px;width:69.0px;">Verificar Datos</div><div class="c" style="left:260.75px;width:93.25px;">25/06/2024 18:26:47</div><div class="c" style="left:354px;width:80.5px;">02/07/2024 04:00</div><div class="c" style="left:434.5px;width:77.0px;">000861</div><div class="c" style="left:511.5px;width:144.0px;">PROVEEDOR A-0000100004157</div><div class="c" style="left:655.5px;width:77.45px;">PROVEEDOR A</div><div class="c" style="left:732.95px;width:55.55px;border-right:none;padding-left:3.7px">22222222222</div></div>
<div class="row " style="top:218.15px"><div class="c" style="left:0px;width:19.25px;padding-left:0;"><div class="cb "></div></div><div class="c" style="left:19.25px;width:28.25px;padding-left:0;"><svg class="abs" style="left:6.6px;top:8.7px" width="12.6" height="12.6" viewBox="0 0 12.6 12.6"><circle cx="6.3" cy="6.3" r="6.2" fill="#55a344"/><path d="M3.3 7.6 L6.3 4.6 L9.3 7.6" fill="none" stroke="#fff" stroke-width="1.5"/></svg></div><div class="c" style="left:47.5px;width:35.5px;padding-left:0;"><svg class="abs" style="left:9.4px;top:11px" width="13" height="9" viewBox="0 0 13 9"><g fill="#7aaede"><circle cx="2.9" cy="3.2" r="1.25"/><path d="M0.2 7.4 Q0.4 4.9 2.6 4.8 L4.4 4.8 L4.4 7.4 Z"/><circle cx="10.1" cy="3.2" r="1.25"/><path d="M12.8 7.4 Q12.6 4.9 10.4 4.8 L8.6 4.8 L8.6 7.4 Z"/></g><g fill="#2a72b9"><ellipse cx="6.5" cy="2.4" rx="1.9" ry="2.3"/><path d="M2.3 8.5 Q2.3 5.6 5.2 5 L5.6 4.2 L7.4 4.2 L7.8 5 Q10.7 5.6 10.7 8.5 Z"/></g></svg></div><div class="c" style="left:83px;width:22.5px;padding-left:0;"><svg class="abs" style="left:5px;top:8.7px" width="10.5" height="12.5" viewBox="0 0 10.5 12.5"><path d="M1.6 9.4 Q0.6 1.8 3.2 0.7 Q5.25 -0.3 7.3 0.7 Q9.9 1.8 8.9 9.4 Z" fill="#6e3b3f"/><ellipse cx="5.25" cy="4.8" rx="2.45" ry="2.9" fill="#f3ad80"/><path d="M3 3.6 Q5.2 1.2 7.6 3.6 Q7 1.2 5.25 1.2 Q3.4 1.2 3 3.6Z" fill="#6e3b3f"/><rect x="4.3" y="6.8" width="1.9" height="2.2" fill="#f4b590"/><path d="M0.2 12.4 Q0.3 9 3.4 8.6 L5.25 10.3 L7.1 8.6 Q10.2 9 10.3 12.4 Z" fill="#e2343f"/><path d="M4.3 9 L5.25 12 L6.2 9 Z" fill="#f3f3f3"/></svg></div><div class="c" style="left:105.5px;width:25.0px;padding-left:0;"></div><div class="c" style="left:130.5px;width:35.25px;padding-left:0;"></div><div class="c" style="left:165.75px;width:13.5px;padding-left:0;"></div><div class="c" style="left:179.25px;width:12.5px;padding-left:0;"></div><div class="c" style="left:191.75px;width:69.0px;">Verificar Datos</div><div class="c" style="left:260.75px;width:93.25px;">25/06/2024 18:26:51</div><div class="c" style="left:354px;width:80.5px;">02/07/2024 04:00</div><div class="c" style="left:434.5px;width:77.0px;">000862</div><div class="c" style="left:511.5px;width:144.0px;">PROVEEDOR A-0000100000025</div><div class="c" style="left:655.5px;width:77.45px;">PROVEEDOR A</div><div class="c" style="left:732.95px;width:55.55px;border-right:none;padding-left:3.7px">23333333332</div></div>
<div class="row e" style="top:248.15px"><div class="c" style="left:0px;width:19.25px;padding-left:0;"><div class="cb "></div></div><div class="c" style="left:19.25px;width:28.25px;padding-left:0;"><svg class="abs" style="left:6.6px;top:8.7px" width="12.6" height="12.6" viewBox="0 0 12.6 12.6"><circle cx="6.3" cy="6.3" r="6.2" fill="#55a344"/><path d="M3.3 7.6 L6.3 4.6 L9.3 7.6" fill="none" stroke="#fff" stroke-width="1.5"/></svg></div><div class="c" style="left:47.5px;width:35.5px;padding-left:0;"><svg class="abs" style="left:9.4px;top:11px" width="13" height="9" viewBox="0 0 13 9"><g fill="#7aaede"><circle cx="2.9" cy="3.2" r="1.25"/><path d="M0.2 7.4 Q0.4 4.9 2.6 4.8 L4.4 4.8 L4.4 7.4 Z"/><circle cx="10.1" cy="3.2" r="1.25"/><path d="M12.8 7.4 Q12.6 4.9 10.4 4.8 L8.6 4.8 L8.6 7.4 Z"/></g><g fill="#2a72b9"><ellipse cx="6.5" cy="2.4" rx="1.9" ry="2.3"/><path d="M2.3 8.5 Q2.3 5.6 5.2 5 L5.6 4.2 L7.4 4.2 L7.8 5 Q10.7 5.6 10.7 8.5 Z"/></g></svg></div><div class="c" style="left:83px;width:22.5px;padding-left:0;"><svg class="abs" style="left:5px;top:8.7px" width="10.5" height="12.5" viewBox="0 0 10.5 12.5"><path d="M1.6 9.4 Q0.6 1.8 3.2 0.7 Q5.25 -0.3 7.3 0.7 Q9.9 1.8 8.9 9.4 Z" fill="#6e3b3f"/><ellipse cx="5.25" cy="4.8" rx="2.45" ry="2.9" fill="#f3ad80"/><path d="M3 3.6 Q5.2 1.2 7.6 3.6 Q7 1.2 5.25 1.2 Q3.4 1.2 3 3.6Z" fill="#6e3b3f"/><rect x="4.3" y="6.8" width="1.9" height="2.2" fill="#f4b590"/><path d="M0.2 12.4 Q0.3 9 3.4 8.6 L5.25 10.3 L7.1 8.6 Q10.2 9 10.3 12.4 Z" fill="#e2343f"/><path d="M4.3 9 L5.25 12 L6.2 9 Z" fill="#f3f3f3"/></svg></div><div class="c" style="left:105.5px;width:25.0px;padding-left:0;"></div><div class="c" style="left:130.5px;width:35.25px;padding-left:0;"></div><div class="c" style="left:165.75px;width:13.5px;padding-left:0;"></div><div class="c" style="left:179.25px;width:12.5px;padding-left:0;"></div><div class="c" style="left:191.75px;width:69.0px;">Verificar Datos</div><div class="c" style="left:260.75px;width:93.25px;">25/06/2024 18:28:47</div><div class="c" style="left:354px;width:80.5px;">02/07/2024 04:00</div><div class="c" style="left:434.5px;width:77.0px;">000864</div><div class="c" style="left:511.5px;width:144.0px;">PROVEEDOR A-0000100005517</div><div class="c" style="left:655.5px;width:77.45px;">PROVEEDOR A</div><div class="c" style="left:732.95px;width:55.55px;border-right:none;padding-left:3.7px">22222222222</div></div>
<div class="abs" style="left:0;top:278.1px;width:788.5px;height:1px;background:#dedede"></div>
<div class="abs" style="left:3.2px;top:415.7px;width:222px;height:4.6px;border-radius:2.3px;background:#b9b9b9"></div>
<div class="abs" style="left:787.5px;top:38px;width:1px;height:386px;background:#e0e0e0"></div><div class="abs" style="left:0;top:422.7px;width:788.5px;height:24.3px;background:#e9e9e9;border-radius:0 0 2px 2px;box-shadow:-1px 0 0 rgba(233,233,233,.6)"></div>
<div class="abs" style="left:8px;top:430.7px;font-size:9px;line-height:11px;color:#3a87c9;white-space:nowrap">Exhibir total de registros</div>
<div class="abs" style="left:694.8px;top:430.6px;font-size:9px;line-height:11px;font-weight:bold;color:#858585;white-space:nowrap">1 - 8</div>
<div class="abs" style="left:720.9px;top:422.7px;width:1px;height:24.3px;background:#dcdcdc"></div>
<div class="abs" style="left:753.8px;top:422.7px;width:1px;height:24.3px;background:#dcdcdc"></div>
<div class="abs" style="left:734.7px;top:431.7px;width:0;height:0;border-top:3.5px solid transparent;border-bottom:3.5px solid transparent;border-right:4.4px solid #c6c6c6"></div>
<div class="abs" style="left:769.8px;top:431.7px;width:0;height:0;border-top:3.5px solid transparent;border-bottom:3.5px solid transparent;border-left:4.4px solid #c6c6c6"></div></div></div>
<div class="abs" style="left:220px;top:108.8px;width:1px;height:430px;background:#ebebeb"></div>
<div class="abs" style="left:214.8px;top:116.2px;width:39.6px;height:21.4px;background:#ffffc6;border:1px solid #e2e2b0;border-radius:2px;font-size:8.25px;line-height:19px;color:#555;text-align:center;box-shadow:0 1px 2px rgba(0,0,0,.15)">Ejecutar</div>
<div class="abs" style="left:635.7px;top:556.4px;width:349.2px;height:30px;background:#fff;border:1px solid #bdbdbd;box-shadow:0 0 5px rgba(0,0,0,.3)"></div>
<div class="abs" style="left:639.6px;top:560.8px;width:10.6px;height:10.6px;background:#c4161c"></div>
<svg class="abs" style="left:641.2px;top:562.4px" width="7.5" height="7.5" viewBox="0 0 7.5 7.5"><path d="M0.3 0.3 H2.9 L5.6 7.2 H4.1 L3.5 5.6 H2.4 L3 4.3 L1.9 1.6 L0.3 5.6 Z M7.2 0.3 V7.2 L4.6 0.3 Z" fill="#fff"/></svg>
<div class="abs" style="left:654.5px;top:560.9px;font-size:8.75px;line-height:11px;color:#777;white-space:nowrap" id="adobetxt">Adobe Genuine Service Alert</div>
<svg class="abs" style="left:968.5px;top:561.5px" width="9" height="9" viewBox="0 0 9 9"><path d="M0.7 0.7 L8.3 8.3 M8.3 0.7 L0.7 8.3" stroke="#e8e8e8" stroke-width="0.9"/></svg>
</body></html>
